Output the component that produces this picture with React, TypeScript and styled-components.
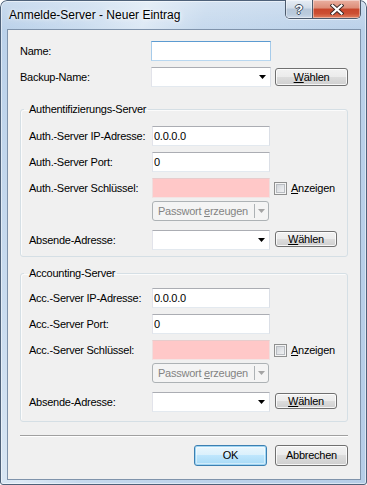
import React from "react";
import styled, { createGlobalStyle } from "styled-components";

const GlobalStyle = createGlobalStyle`
  html, body { margin: 0; padding: 0; background: #ffffff; }
  body { font-family: "Liberation Sans", Arial, sans-serif; }
  #root { width: 367px; height: 485px; }
`;

const Window = styled.div`
  box-sizing: border-box;
  width: 367px;
  height: 485px;
  padding: 0 6px 5px 7px;
  display: flex;
  flex-direction: column;
  border-radius: 7px 7px 3px 3px;
  background:
    linear-gradient(180deg, rgba(255, 255, 255, 0.25) 0px, rgba(255, 255, 255, 0) 30px),
    linear-gradient(105deg, #b9d0e9 0%, #cadcef 18%, #dde9f5 30%, #c6d9ed 42%, #bcd2ea 70%, #b6cde7 100%);
  box-shadow: inset 0 0 0 1px #4e6179, inset 0 0 0 2px rgba(255, 255, 255, 0.5);
`;

const TitleBar = styled.div`
  height: 29px;
  flex: none;
  display: flex;
  justify-content: space-between;
  align-items: flex-start;
`;

const Title = styled.div`
  margin-top: 8px;
  padding-left: 2px;
  font-size: 12px;
  color: #000;
  white-space: nowrap;
  text-shadow: 0 0 6px rgba(255, 255, 255, 0.9), 0 0 3px rgba(255, 255, 255, 0.9);
`;

const CaptionGroup = styled.div`
  display: flex;
  height: 19px;
  box-sizing: border-box;
  border: 1px solid #4d5b6d;
  border-top: none;
  border-radius: 0 0 5px 5px;
  overflow: hidden;
  box-shadow: 0 1px 0 rgba(255, 255, 255, 0.6);
`;

const CaptionButton = styled.div<{ $w: number; $close?: boolean }>`
  width: ${(p) => p.$w}px;
  height: 100%;
  display: flex;
  align-items: center;
  justify-content: center;
  box-shadow: inset 0 0 0 1px rgba(255, 255, 255, 0.4);
  background: ${(p) =>
    p.$close
      ? "linear-gradient(180deg, #eab0a1 0%, #dd8d77 45%, #c8462b 50%, #cc4f33 75%, #e0805f 100%)"
      : "linear-gradient(180deg, #e6edf5 0%, #d1dce8 45%, #b7c7d9 50%, #bacbdd 80%, #cddaea 100%)"};
  & + & {
    border-left: 1px solid #4d5b6d;
  }
`;

const HelpGlyph = styled.span`
  font-family: "Liberation Sans", Arial, sans-serif;
  font-weight: bold;
  font-size: 13px;
  line-height: 13px;
  color: #ffffff;
  text-shadow: 1px 0 0 #3c4a5c, -1px 0 0 #3c4a5c, 0 1px 0 #3c4a5c, 0 -1px 0 #3c4a5c;
`;

const Client = styled.div`
  flex: 1;
  box-sizing: border-box;
  border: 1px solid #7f93ab;
  background: #f0f0f0;
  padding: 11px 12px 0 12px;
  display: flex;
  flex-direction: column;
  font-size: 11px;
  letter-spacing: -0.25px;
  color: #000;
`;

const Row = styled.div<{ $mt: number }>`
  display: flex;
  align-items: center;
  height: 20px;
  margin-top: ${(p) => p.$mt}px;
`;

const LabelCell = styled.span<{ $w: number }>`
  width: ${(p) => p.$w}px;
  flex: none;
  line-height: 13px;
  white-space: nowrap;
`;

const TextBox = styled.input<{ $w: number; $focus?: boolean; $pink?: boolean }>`
  width: ${(p) => p.$w}px;
  height: 20px;
  box-sizing: border-box;
  margin: 0;
  padding: 0 1px;
  flex: none;
  font-family: "Liberation Sans", Arial, sans-serif;
  font-size: 11px;
  letter-spacing: -0.25px;
  color: #000;
  outline: none;
  border: 1px solid;
  border-color: ${(p) =>
    p.$focus
      ? "#5c9bd1 #a6cbea #b8d7f0 #a6cbea"
      : p.$pink
      ? "#e7cccc #efdede #f3e4e4 #efdede"
      : "#abadb3 #dbdfe6 #e3e9ef #e2e3ea"};
  background: ${(p) => (p.$pink ? "#ffc8c8" : "#ffffff")};
`;

const Combo = styled.div<{ $w: number }>`
  width: ${(p) => p.$w}px;
  height: 20px;
  box-sizing: border-box;
  flex: none;
  display: flex;
  align-items: center;
  justify-content: flex-end;
  padding-right: 4px;
  background: #ffffff;
  border: 1px solid;
  border-color: #abadb3 #dbdfe6 #e3e9ef #e2e3ea;
`;

const Button = styled.button<{ $w: number; $h: number; $ml?: number; $default?: boolean; $top?: boolean }>`
  width: ${(p) => p.$w}px;
  height: ${(p) => p.$h}px;
  margin: 0 0 0 ${(p) => p.$ml ?? 0}px;
  ${(p) => (p.$top ? "align-self: flex-start; margin-top: 1px;" : "")}
  padding: 0;
  flex: none;
  box-sizing: border-box;
  border-radius: 3px;
  font-family: "Liberation Sans", Arial, sans-serif;
  font-size: 11px;
  letter-spacing: -0.25px;
  color: #000;
  line-height: 13px;
  border: 1px solid ${(p) => (p.$default ? "#3c7fb1" : "#707070")};
  background: ${(p) =>
    p.$default
      ? "linear-gradient(180deg, #eaf6fd 0%, #d9f0fc 50%, #bee6fd 50%, #a7d9f5 100%)"
      : "linear-gradient(180deg, #f2f2f2 0%, #ebebeb 50%, #dddddd 50%, #cfcfcf 100%)"};
  box-shadow: ${(p) =>
    p.$default
      ? "inset 0 0 0 1px #9fd5f3, inset 0 0 0 2px rgba(255,255,255,0.45)"
      : "inset 0 0 0 1px rgba(255,255,255,0.8)"};
`;

const Group = styled.fieldset<{ $mt: number; $pt: number; $pb: number }>`
  margin: ${(p) => p.$mt}px 0 0 0;
  padding: ${(p) => p.$pt}px 8px ${(p) => p.$pb}px 8px;
  border: 1px solid #d5dfe5;
  border-radius: 3px;
  min-width: 0;
  box-shadow: inset 1px 1px 0 rgba(255, 255, 255, 0.7);
`;

const Legend = styled.legend`
  font-size: 11px;
  letter-spacing: -0.25px;
  line-height: 13px;
  padding: 0 2px 0 5px;
  margin-left: -5px;
  color: #000;
`;

const CheckBox = styled.span`
  width: 13px;
  height: 13px;
  flex: none;
  box-sizing: border-box;
  margin-left: 4px;
  border: 1px solid #8e8f8f;
  background: linear-gradient(135deg, #c8ccd2 0%, #e4e6e9 55%, #f7f7f7 100%);
  box-shadow: inset 0 0 0 1px #f4f4f4, inset 0 0 0 2px #b9bdc2;
`;

const CheckLabel = styled.span`
  margin-left: 4px;
  line-height: 13px;
  white-space: nowrap;
`;

const SplitButton = styled.div<{ $w: number }>`
  width: ${(p) => p.$w}px;
  height: 20px;
  flex: none;
  box-sizing: border-box;
  display: flex;
  align-items: center;
  border: 1px solid #adb2b5;
  border-radius: 3px;
  background: #f4f4f4;
  color: #838383;
`;

const SplitText = styled.span`
  flex: 1;
  padding-left: 5px;
  line-height: 13px;
  white-space: nowrap;
`;

const SplitDivider = styled.span`
  width: 1px;
  height: 14px;
  background: #adb2b5;
`;

const SplitArrow = styled.span`
  width: 13px;
  display: flex;
  justify-content: center;
`;

const Separator = styled.div`
  margin-top: 13px;
  height: 0;
  border-top: 1px solid #a0a0a0;
  border-bottom: 1px solid #ffffff;
`;

const ButtonBar = styled.div`
  margin-top: 8px;
  display: flex;
  justify-content: flex-end;
  gap: 8px;
`;

const Arrow = ({ color = "#000" }: { color?: string }) => (
  <svg width="7" height="4" viewBox="0 0 7 4" style={{ display: "block" }}>
    <path d="M0 0 H7 L3.5 4 Z" fill={color} />
  </svg>
);

const CloseIcon = () => (
  <svg width="14" height="11" viewBox="0 0 14 11" style={{ display: "block" }}>
    <path d="M2.5 1.5 L11.5 9.5 M11.5 1.5 L2.5 9.5" stroke="#3b2a28" strokeWidth="4" strokeLinecap="square" />
    <path d="M2.5 1.5 L11.5 9.5 M11.5 1.5 L2.5 9.5" stroke="#ffffff" strokeWidth="2.2" strokeLinecap="square" />
  </svg>
);

type ServerProps = { title: string; prefix: string; mt: number; pt: number; pb: number };

const ServerGroup = ({ title, prefix, mt, pt, pb }: ServerProps) => (
  <Group $mt={mt} $pt={pt} $pb={pb}>
    <Legend>{title}</Legend>
    <Row $mt={0}>
      <LabelCell $w={123}>{prefix}-Server IP-Adresse:</LabelCell>
      <TextBox $w={118} readOnly value="0.0.0.0" />
    </Row>
    <Row $mt={6}>
      <LabelCell $w={123}>{prefix}-Server Port:</LabelCell>
      <TextBox $w={118} readOnly value="0" />
    </Row>
    <Row $mt={6}>
      <LabelCell $w={123}>{prefix}-Server Schlüssel:</LabelCell>
      <TextBox $w={118} $pink readOnly value="" />
      <CheckBox />
      <CheckLabel>
        <u>A</u>nzeigen
      </CheckLabel>
    </Row>
    <Row $mt={3}>
      <LabelCell $w={123} />
      <SplitButton $w={117}>
        <SplitText>
          Passwort <u>e</u>rzeugen
        </SplitText>
        <SplitDivider />
        <SplitArrow>
          <Arrow color="#a4a4a4" />
        </SplitArrow>
      </SplitButton>
    </Row>
    <Row $mt={9}>
      <LabelCell $w={123}>Absende-Adresse:</LabelCell>
      <Combo $w={118}>
        <Arrow />
      </Combo>
      <Button $w={62} $h={16} $ml={5} $top>
        <u>W</u>ählen
      </Button>
    </Row>
  </Group>
);

export default function App() {
  return (
    <>
      <GlobalStyle />
      <Window>
        <TitleBar>
          <Title>Anmelde-Server - Neuer Eintrag</Title>
          <CaptionGroup>
            <CaptionButton $w={26}>
              <HelpGlyph>?</HelpGlyph>
            </CaptionButton>
            <CaptionButton $w={47} $close>
              <CloseIcon />
            </CaptionButton>
          </CaptionGroup>
        </TitleBar>
        <Client>
          <Row $mt={0}>
            <LabelCell $w={131}>Name:</LabelCell>
            <TextBox $w={120} $focus readOnly value="" />
          </Row>
          <Row $mt={6}>
            <LabelCell $w={131}>Backup-Name:</LabelCell>
            <Combo $w={120}>
              <Arrow />
            </Combo>
            <Button $w={73} $h={18} $ml={4}>
              <u>W</u>ählen
            </Button>
          </Row>
          <ServerGroup title="Authentifizierungs-Server" prefix="Auth." mt={16} pt={10} pb={6} />
          <ServerGroup title="Accounting-Server" prefix="Acc." mt={10} pt={8} pb={9} />
          <Separator />
          <ButtonBar>
            <Button $w={73} $h={21} $default>
              OK
            </Button>
            <Button $w={73} $h={21}>
              Abbrechen
            </Button>
          </ButtonBar>
        </Client>
      </Window>
    </>
  );
}
